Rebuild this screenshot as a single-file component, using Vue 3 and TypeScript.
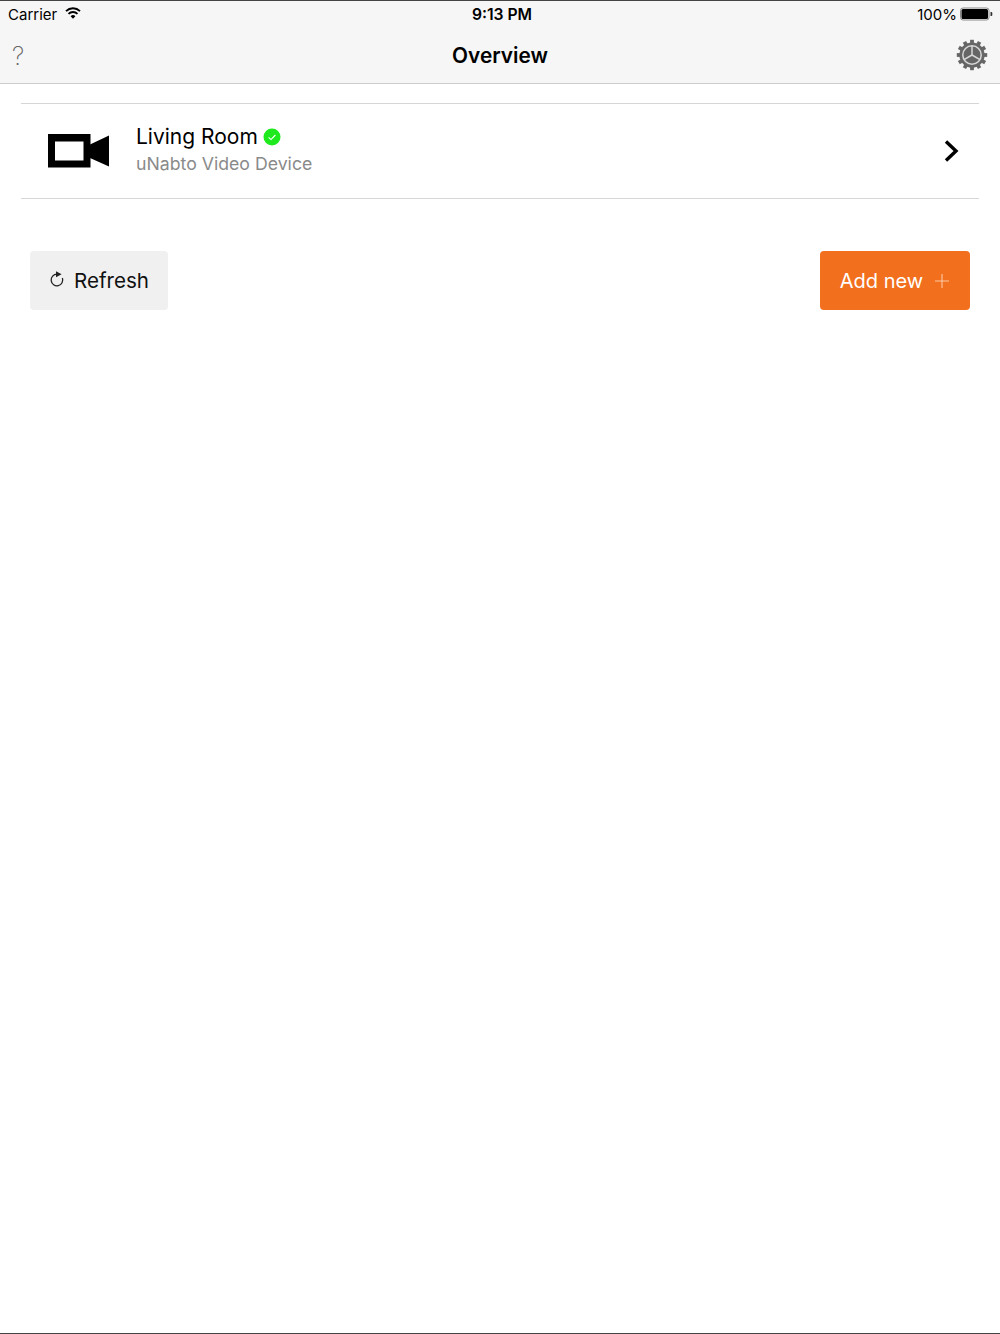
<script setup lang="ts">
import { ref } from 'vue';

const devices = ref([{ name: 'Living Room', type: 'uNabto Video Device', online: true }]);

const gearTeeth = Array.from({ length: 12 }, (_, i) => i * 30);
</script>

<template>
  <div class="screen">
    <header class="top">
      <div class="status">
        <div class="status-left">
          <span>Carrier</span>
          <svg class="wifi" viewBox="0 0 16 12" width="16" height="12">
            <path d="M8 11.8 5.6 9.2a3.4 3.4 0 0 1 4.8 0z" fill="#000" />
            <path d="M3.5 6.9a6.4 6.4 0 0 1 9 0" fill="none" stroke="#000" stroke-width="1.9" />
            <path d="M1 4.1a10.2 10.2 0 0 1 14 0" fill="none" stroke="#000" stroke-width="1.9" />
          </svg>
        </div>
        <div class="status-time">9:13 PM</div>
        <div class="status-right">
          <span>100%</span>
          <svg class="battery" viewBox="0 0 33 14" width="33" height="14">
            <rect x="0.5" y="1" width="28.5" height="12" rx="2.5" fill="none" stroke="#8a8a8a" />
            <rect x="1.5" y="2" width="26.5" height="10" rx="1.5" fill="#000" />
            <path d="M30.5 5h.8a1 1 0 0 1 1 1v2a1 1 0 0 1-1 1h-.8z" fill="#333" />
          </svg>
        </div>
      </div>
      <nav class="nav">
        <span class="help">?</span>
        <h1 class="title">Overview</h1>
        <svg class="gear" viewBox="0 0 32 32" width="32" height="32">
          <rect
            v-for="deg in gearTeeth"
            :key="deg"
            x="14.1"
            y="0.8"
            width="3.8"
            height="5"
            fill="#666"
            :transform="`rotate(${deg} 16 16)`"
          />
          <circle cx="16" cy="16" r="12.6" fill="#666" />
          <circle cx="16" cy="16" r="9.2" fill="none" stroke="#d8d8d8" stroke-width="1.5" />
          <path d="M16 6.8V16M16 16 8 20.6M16 16 24 20.6" fill="none" stroke="#d8d8d8" stroke-width="1.5" />
        </svg>
      </nav>
    </header>

    <main class="content">
      <ul class="list">
        <li v-for="d in devices" :key="d.name" class="row">
          <svg class="cam" viewBox="0 0 62 34" width="62" height="34">
            <path d="M1 0h42.5v33.5H1z M8 7.5v19h28.5v-19z" fill-rule="evenodd" fill="#000" />
            <path d="M43 10.5 62 1.5V32.5L43 24z" fill="#000" />
          </svg>
          <div class="info">
            <div class="name">
              <span>{{ d.name }}</span>
              <svg v-if="d.online" viewBox="0 0 18 18" width="18" height="18">
                <circle cx="9" cy="9" r="8.5" fill="#1de91d" />
                <path d="M5.6 9.4 8 11.6 12.4 7" fill="none" stroke="#fff" stroke-width="1.1" />
              </svg>
            </div>
            <div class="type">{{ d.type }}</div>
          </div>
          <svg class="chevron" viewBox="0 0 16 24" width="16" height="24">
            <path d="M3 2.5 13 12 3 21.5" fill="none" stroke="#000" stroke-width="3.4" />
          </svg>
        </li>
      </ul>

      <div class="actions">
        <button class="btn btn-refresh" type="button">
          <svg class="refresh-icon" viewBox="0 0 16 18" width="16" height="18">
            <path d="M8 4.2A5.8 5.8 0 1 0 13.4 8" fill="none" stroke="#222" stroke-width="1.3" />
            <path d="M7 1.2 12.6 4.2 7 7.2z" fill="#222" />
          </svg>
          Refresh
        </button>
        <button class="btn btn-add" type="button">
          Add new
          <svg viewBox="0 0 16 16" width="16" height="16">
            <path d="M8 1v14M1 8h14" stroke="#fbc8a2" stroke-width="1.1" />
          </svg>
        </button>
      </div>
    </main>
  </div>
</template>

<style>
html,
body {
  margin: 0;
  background: #fff;
}
</style>

<style scoped>
.screen {
  display: flex;
  flex-direction: column;
  box-sizing: border-box;
  width: 1000px;
  height: 1334px;
  overflow: hidden;
  color: #000;
  font-family: Inter, 'Liberation Sans', sans-serif;
  background: #fff;
  border-top: 1px solid #444;
  border-bottom: 1px solid #444;
}

.top {
  flex: none;
  box-sizing: border-box;
  height: 83px;
  background: #f6f6f6;
  border-bottom: 1px solid #ccc;
}

.status {
  display: grid;
  grid-template-columns: 1fr auto 1fr;
  align-items: center;
  height: 26px;
  padding: 0 8px;
  font-size: 15px;
}

.status-left {
  display: flex;
  align-items: center;
  gap: 8px;
}

.wifi {
  margin-top: -3px;
}

.status-time {
  padding-left: 4px;
  font-size: 15.7px;
  font-weight: 600;
}

.status-right {
  display: flex;
  align-items: center;
  justify-content: flex-end;
  gap: 3px;
  margin-right: -1px;
}

.nav {
  display: grid;
  grid-template-columns: 1fr auto 1fr;
  align-items: center;
  height: 56px;
  padding: 0 12px;
}

.help {
  margin-top: 2px;
  font-size: 25px;
  font-weight: 200;
  color: #666;
}

.title {
  margin: 0;
  font-size: 20.8px;
  font-weight: 600;
}

.gear {
  justify-self: end;
}

.content {
  flex: 1;
  padding: 19px 21px 0;
}

.list {
  padding: 0;
  margin: 0;
  list-style: none;
  border-top: 1px solid #d6d6d6;
}

.row {
  display: flex;
  align-items: center;
  height: 94px;
  padding: 0 20px 0 26px;
  border-bottom: 1px solid #d6d6d6;
}

.cam {
  flex: none;
  margin-right: 27px;
}

.info {
  flex: 1;
  margin-top: -2px;
}

.name {
  display: flex;
  align-items: center;
  gap: 5px;
  font-size: 21px;
  line-height: 27px;
}

.type {
  margin-top: 1px;
  font-size: 17.7px;
  line-height: 26px;
  color: #8a8a8a;
}

.actions {
  display: flex;
  justify-content: space-between;
  padding: 52px 9px 0;
}

.btn {
  display: flex;
  align-items: center;
  justify-content: center;
  box-sizing: border-box;
  height: 59px;
  font-family: inherit;
  border: 0;
  border-radius: 4px;
}

.btn-refresh {
  gap: 9px;
  width: 138px;
  font-size: 20.6px;
  color: #111;
  background: #f0f0f0;
}

.refresh-icon {
  margin-top: -3px;
}

.btn-add {
  gap: 11px;
  width: 150px;
  font-size: 20px;
  color: #fff;
  background: #f26f1d;
}
</style>
